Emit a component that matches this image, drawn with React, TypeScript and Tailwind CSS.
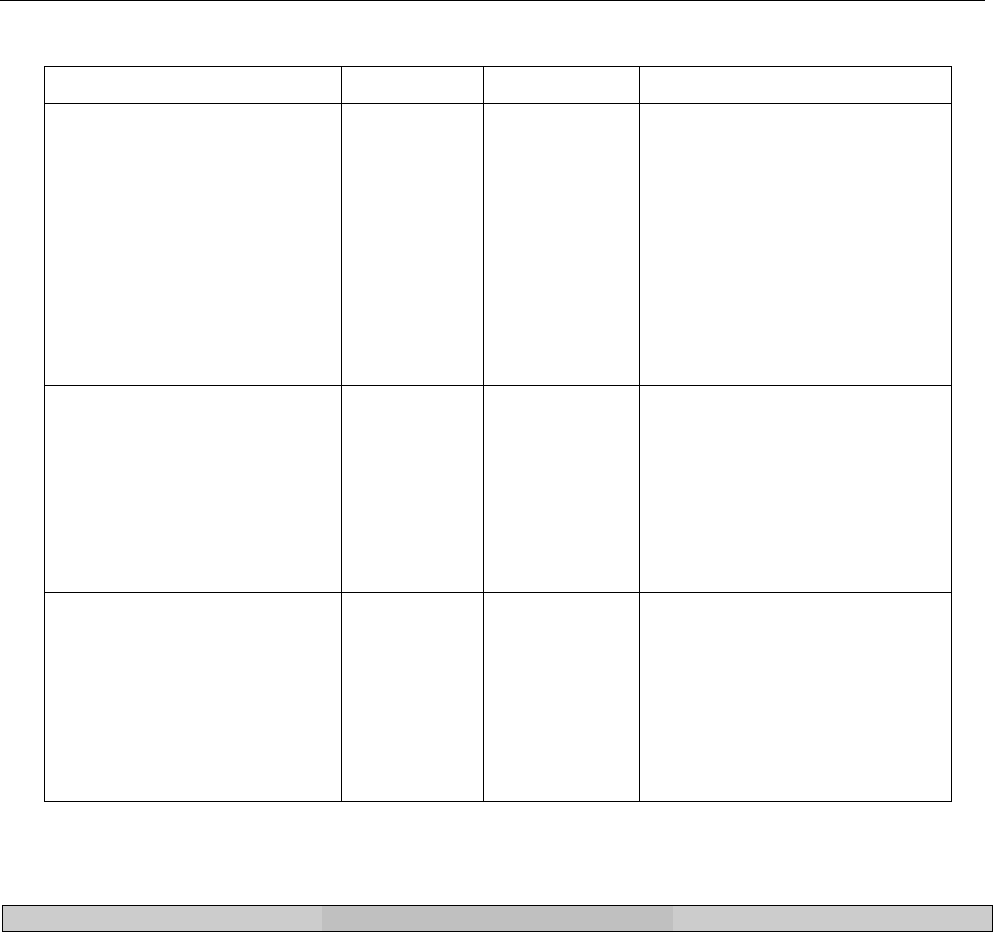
import React from 'react';

const cols = ['w-[297px]', 'w-[142px]', 'w-[156px]', 'w-[312px]'];
const rows = ['h-[282px]', 'h-[207px]', 'h-[209px]'];

export default function App() {
  return (
    <div className="w-[1001px] h-[933px] bg-white flex flex-col font-['Liberation_Sans',sans-serif]">
      {/* Page rule */}
      <div className="w-[985px] border-t border-black" />

      {/* Grid table */}
      <div className="pl-[44px] pt-[65px]">
        <table className="table-fixed border-collapse">
          <thead>
            <tr className="h-[37px]">
              {cols.map((c, i) => (
                <th key={i} className={`${c} border border-black p-0`} />
              ))}
            </tr>
          </thead>
          <tbody>
            {rows.map((r, ri) => (
              <tr key={ri} className={r}>
                {cols.map((c, i) => (
                  <td key={i} className={`${c} border border-black p-0`} />
                ))}
              </tr>
            ))}
          </tbody>
        </table>
      </div>

      {/* Footer bar */}
      <div className="mt-auto mb-[1px] ml-[2px] w-[991px] h-[27px] border border-black flex">
        <div className="w-[319px] bg-[#cccccc]" />
        <div className="w-[351px] bg-[#c0c0c0]" />
        <div className="flex-1 bg-[#cccccc]" />
      </div>
    </div>
  );
}
